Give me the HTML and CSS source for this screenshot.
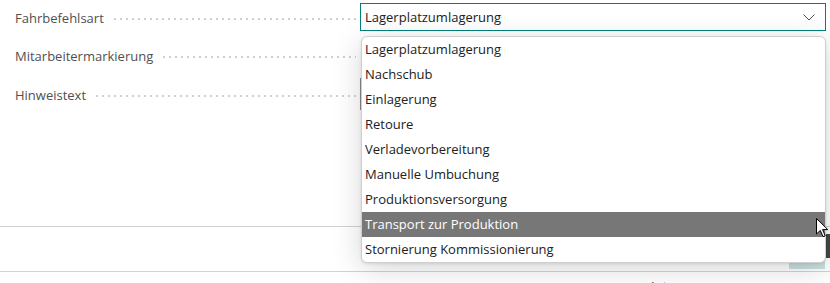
FILE: index.html
```html
<!DOCTYPE html>
<html lang="de">
<head>
<meta charset="utf-8">
<title>Fahrbefehl</title>
<link rel="stylesheet" href="styles.css">
</head>
<body>
<div class="page">
  <div class="form">
    <div class="label r1"><span class="text">Fahrbefehlsart</span><span class="leader"></span></div>
    <div class="field r1">
      <div class="select">
        <span>Lagerplatzumlagerung</span>
        <svg class="chevron" width="12" height="7" viewBox="0 0 12 7"><path d="M0.5 0.5 L6 6 L11.5 0.5" fill="none" stroke="#505050" stroke-width="1"/></svg>
      </div>
    </div>
    <div class="label r2"><span class="text">Mitarbeitermarkierung</span><span class="leader"></span></div>
    <div class="field r2"></div>
    <div class="label r3"><span class="text">Hinweistext</span><span class="leader"></span></div>
    <div class="field r3"><div class="textarea"></div></div>
  </div>
  <div class="bar">
    <span class="btn"></span>
    <span class="scroll"></span>
  </div>
  <div class="footer"><span class="internes">Internes</span></div>

  <ul class="dropdown">
    <li>Lagerplatzumlagerung</li>
    <li>Nachschub</li>
    <li>Einlagerung</li>
    <li>Retoure</li>
    <li>Verladevorbereitung</li>
    <li>Manuelle Umbuchung</li>
    <li>Produktionsversorgung</li>
    <li class="active">Transport zur Produktion</li>
    <li>Stornierung Kommissionierung</li>
  </ul>

  <svg class="cursor" width="13" height="20" viewBox="0 0 13 20">
    <path d="M0.5 0.5 L0.5 16 L4.3 12.4 L7 18.6 L9.2 17.7 L6.6 11.6 L11.8 11.6 Z" fill="#fff" stroke="#000" stroke-width="1" stroke-linejoin="round"/>
  </svg>
</div>
</body>
</html>
```
FILE: styles.css
```css
* { box-sizing: border-box; }
html, body { margin: 0; padding: 0; background: #fff; }
body {
  font-family: "Open Sans", "Noto Sans", sans-serif;
  font-size: 13px;
  color: #212121;
}
.page {
  position: relative;
  width: 830px;
  height: 283px;
  overflow: hidden;
}
.form {
  height: 226px;
  padding-left: 15px;
  display: grid;
  grid-template-columns: 345px 466px;
  grid-template-rows: 36px 38px 37px;
  row-gap: 1px;
}
.label {
  display: flex;
  align-items: center;
  color: #505050;
  padding-right: 4px;
}
.label .text { white-space: nowrap; }
.leader {
  flex: 1;
  height: 2px;
  margin: 2px 0 0 10px;
  background-image: linear-gradient(to right, #d0d0d0 2px, transparent 2px);
  background-size: 6px 2px;
  background-repeat: repeat-x;
}
.field { position: relative; }
.select {
  margin-top: 3px;
  height: 28px;
  border: 1px solid #00827c;
  display: flex;
  align-items: center;
  justify-content: space-between;
  padding: 0 10px 0 4px;
  color: #212121;
}
.chevron { display: block; margin-top: 1px; }
.textarea {
  margin-top: 2px;
  height: 32px;
  border: 1px solid #8a8a8a;
}
.bar {
  height: 46px;
  border-top: 1px solid #d2d2d2;
  border-bottom: 1px solid #d2d2d2;
  display: flex;
  justify-content: flex-end;
}
.btn {
  align-self: flex-end;
  width: 36px;
  height: 13px;
  margin-bottom: 2px;
  margin-right: -1px;
  background: #c9e0e1;
}
.scroll {
  align-self: flex-start;
  width: 6px;
  height: 24px;
  margin-top: 7px;
  background: #474747;
}
.footer {
  padding: 5px 0 0 651px;
  color: #333;
}
.dropdown {
  position: absolute;
  left: 361px;
  top: 36px;
  width: 465px;
  margin: 0;
  padding: 0;
  list-style: none;
  background: #fff;
  border: 1px solid #cfcfcf;
  border-radius: 6px;
  overflow: hidden;
  box-shadow: 0 6px 30px rgba(0, 0, 0, 0.16), 0 1px 3px rgba(0, 0, 0, 0.1);
}
.dropdown li {
  height: 25px;
  line-height: 25px;
  padding-left: 3px;
  color: #212121;
  white-space: nowrap;
}
.dropdown li.active {
  background: #777;
  color: #fff;
}
.cursor {
  position: absolute;
  left: 816px;
  top: 218px;
}
```
